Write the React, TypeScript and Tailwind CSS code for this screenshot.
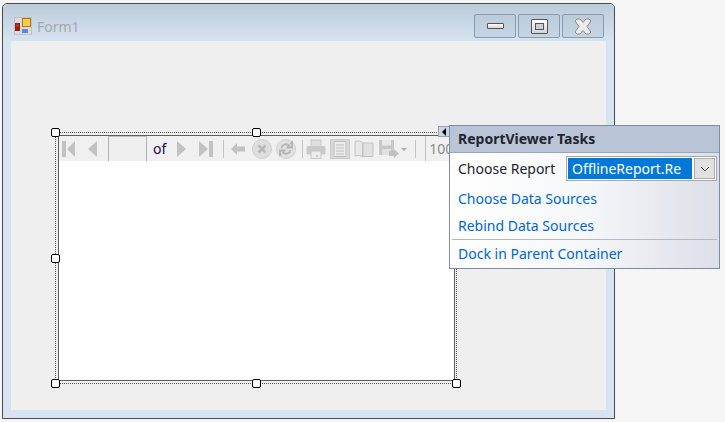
const gray = '#c2c2c2';

const FirstIcon = () => (
  <svg width="15" height="18" viewBox="0 0 15 18"><rect x="0" y="1" width="4" height="16" fill={gray} /><path d="M13 1v16L5 9z" fill={gray} /></svg>
);
const PrevIcon = () => (
  <svg width="11" height="18" viewBox="0 0 11 18"><path d="M10 1v16L1 9z" fill={gray} /></svg>
);
const NextIcon = () => (
  <svg width="11" height="18" viewBox="0 0 11 18"><path d="M1 1v16l9-8z" fill={gray} /></svg>
);
const LastIcon = () => (
  <svg width="14" height="18" viewBox="0 0 14 18"><path d="M0 1v16l9-8z" fill={gray} /><rect x="10" y="1" width="4" height="16" fill={gray} /></svg>
);
const BackIcon = () => (
  <svg width="14" height="12" viewBox="0 0 14 12"><path d="M0 6l6-6v3.500h8v5H6V12z" fill={gray} /></svg>
);
const StopIcon = () => (
  <svg width="20" height="20" viewBox="0 0 20 20">
    <circle cx="10" cy="10" r="9.500" fill="#dedede" stroke="#cfcfcf" />
    <path d="M6.500 6.500l7 7M13.500 6.500l-7 7" stroke="#b8b8b8" strokeWidth="2.500" />
  </svg>
);
const RefreshIcon = () => (
  <svg width="20" height="20" viewBox="0 0 20 20">
    <circle cx="10" cy="10" r="9.500" fill="#e0e0e0" stroke="#cfcfcf" />
    <path d="M5.500 9a4.500 4.500 0 0 1 7.500-2.500l-1.500 2H16V3.500L14.500 5" fill="none" stroke="#b4b4b4" strokeWidth="1.800" />
    <path d="M14.500 11a4.500 4.500 0 0 1-7.500 2.500l1.500-2H4v4.500L5.500 15" fill="none" stroke="#b4b4b4" strokeWidth="1.800" />
  </svg>
);
const PrintIcon = () => (
  <svg width="20" height="20" viewBox="0 0 20 20">
    <rect x="5" y="1" width="10" height="7" fill="#dedede" stroke="#c8c8c8" />
    <rect x="0.500" y="7" width="19" height="8.500" rx="1.500" fill="#c8c8c8" />
    <rect x="5" y="12" width="10" height="7.500" fill="#ececec" stroke="#c8c8c8" />
    <rect x="10" y="16" width="2" height="2" fill="#c8c8c8" />
  </svg>
);
const LayoutIcon = () => (
  <svg width="20" height="20" viewBox="0 0 20 20">
    <rect x="0.500" y="0.500" width="19" height="19" fill="#d8d8d8" stroke="#cccccc" />
    <rect x="4" y="2.500" width="12" height="15" fill="#ebebeb" stroke="#c0c0c0" />
    <path d="M6 6h8M6 9h8M6 12h8M6 15h8" stroke="#c0c0c0" />
  </svg>
);
const PageIcon = () => (
  <svg width="20" height="18" viewBox="0 0 20 18">
    <path d="M1 1.500c3-1 6-.5 7.500 1V17C7 15.500 4 15 1 16z" fill="#e8e8e8" stroke="#c2c2c2" />
    <path d="M9 3h10v13.500H9z" fill="#e0e0e0" stroke="#c2c2c2" />
  </svg>
);
const SaveIcon = () => (
  <svg width="20" height="20" viewBox="0 0 20 20">
    <path d="M0 1h15v15H0z" fill="#c8c8c8" />
    <rect x="3" y="1" width="9" height="5.500" fill="#e8e8e8" />
    <rect x="3" y="10" width="9" height="6" fill="#e0e0e0" />
    <path d="M10 12h5v-2l5 4.500-5 4.500v-2h-5z" fill="#c0c0c0" />
  </svg>
);

const Handle = ({ className }: { className: string }) => (
  <div className={`absolute h-[9px] w-[9px] rounded-[2px] border border-black bg-white ${className}`} />
);

const Separator = ({ className }: { className: string }) => (
  <div className={`h-[18px] w-px shrink-0 bg-[#c4c4c4] ${className}`} />
);

const CaptionButton = ({ children }: { children: React.ReactNode }) => (
  <div className="flex h-[24px] w-[42px] items-center justify-center rounded-[2px] border border-[#8a9ab2] bg-gradient-to-b from-[#bccbda] to-[#c6d5e4]">
    {children}
  </div>
);

const App = () => {
  return (
    <div className="relative h-[422px] w-[725px] overflow-hidden bg-[#f5f5f5] pt-[3px] pl-[2px] font-['Noto_Sans',sans-serif]">
      {/* Form window */}
      <div className="flex h-[416px] w-[613px] flex-col rounded-t-[5px] border border-[#4a4a4a] bg-[#d6e4f1]">
        <div className="flex h-[37px] items-start rounded-t-[4px] bg-gradient-to-b from-[#bccbda] to-[#d5e3f1] pr-[10px] pl-[11px]">
          <svg className="mt-[13px]" width="18" height="18" viewBox="0 0 18 18">
            <rect width="18" height="18" fill="#c0c0c0" />
            <rect x="1" y="1" width="16" height="16" fill="#dadada" />
            <rect x="1" y="6" width="5" height="8" fill="#9c1c10" />
            <rect x="2.500" y="7.500" width="2" height="2" fill="#e04030" />
            <rect x="8.500" y="1.500" width="8" height="8" fill="#f7cd48" stroke="#b07a10" />
            <rect x="8" y="12" width="6" height="4" fill="#4c8ee0" />
          </svg>
          <span className="mt-[13px] ml-[5px] text-[14px] leading-[20px] text-[#a4a8ac]">Form1</span>
          <div className="mt-[10px] ml-auto flex gap-[2px]">
            <CaptionButton>
              <div className="h-[6px] w-[17px] rounded-[1px] border border-[#555555] bg-gradient-to-b from-white to-[#d4d4d4]" />
            </CaptionButton>
            <CaptionButton>
              <div className="flex h-[15px] w-[17px] items-center justify-center rounded-[1px] border border-[#555555] bg-gradient-to-b from-white to-[#d4d4d4]">
                <div className="h-[7px] w-[9px] border border-[#555555] bg-[#c2d0df]" />
              </div>
            </CaptionButton>
            <CaptionButton>
              <svg width="18" height="17" viewBox="0 0 18 17">
                <path d="M1 3l2-2h3l3 3.500L12 1h3l2 2-4 5.500 4 5.500-2 2h-3L9 12.500 6 16H3l-2-2 4-5.500z" fill="#ececec" stroke="#8a8a8a" strokeWidth="1" />
              </svg>
            </CaptionButton>
          </div>
        </div>

        {/* Design surface */}
        <div className="mx-[8px] h-[369px] bg-[#efefef] pt-[94px] pl-[47px]">
          <div className="h-[246px] w-[397px] border border-[#5c5c5c] bg-white">
            <div className="flex h-[25px] items-center bg-[#f0f0f0] pl-[3px] text-[14px] [&>*]:shrink-0">
              <FirstIcon />
              <div className="ml-[10px]"><PrevIcon /></div>
              <div className="ml-[10px] h-full w-[39px] border-x border-t border-x-[#b0b0b0] border-t-[#c0c0c0] bg-[#efefef]" />
              <span className="ml-[6px] text-[#1a0a58]">of</span>
              <div className="ml-[10px]"><NextIcon /></div>
              <div className="ml-[12px]"><LastIcon /></div>
              <Separator className="ml-[10px]" />
              <div className="ml-[7px]"><BackIcon /></div>
              <div className="ml-[7px]"><StopIcon /></div>
              <div className="ml-[4px]"><RefreshIcon /></div>
              <Separator className="ml-[6px]" />
              <div className="ml-[3px]"><PrintIcon /></div>
              <div className="ml-[4px]"><LayoutIcon /></div>
              <div className="ml-[4px]"><PageIcon /></div>
              <div className="ml-[5px]"><SaveIcon /></div>
              <div className="mt-[2px] ml-[2px] h-0 w-0 border-x-[3px] border-t-[3px] border-x-transparent border-t-[#a8a8a8]" />
              <Separator className="ml-[8px]" />
              <div className="ml-[9px] flex h-full w-[27px] items-center border-l border-[#c0c0c0] pl-[3px] whitespace-nowrap text-[#8c8c8c]">100%</div>
            </div>
          </div>
        </div>
      </div>

      {/* Selection frame */}
      <div className="absolute top-[132px] left-[55px] h-[252px] w-[402px] border border-dotted border-[#555555]" />
      <Handle className="top-[128px] left-[51px]" />
      <Handle className="top-[128px] left-[252px]" />
      <Handle className="top-[254px] left-[51px]" />
      <Handle className="top-[379px] left-[51px]" />
      <Handle className="top-[379px] left-[252px]" />
      <Handle className="top-[379px] left-[452px]" />

      {/* Smart tag */}
      <div className="absolute top-[126px] left-[438px] flex h-[11px] w-[12px] items-center justify-center border border-[#8fa3bd] bg-[#c8d6e6]">
        <div className="h-0 w-0 border-y-[4px] border-r-[4px] border-y-transparent border-r-black" />
      </div>

      {/* Tasks panel */}
      <div className="absolute top-[125px] left-[449px] h-[144px] w-[271px] border border-[#7f8da3] bg-gradient-to-r from-white via-[#f6f7f9] to-[#dcdfe8] text-[14px] leading-[20px]">
        <div className="flex h-[27px] items-center border-b border-[#9aa7ba] bg-[#b9c5d6] pl-[8px] font-bold text-[#1f2430]">ReportViewer Tasks</div>
        <div className="flex h-[31px] items-center pr-[2px] pl-[8px] text-[#1f2430]">
          <span>Choose Report</span>
          <div className="ml-auto flex h-[25px] w-[151px] items-center gap-[2px] border border-[#a8a8a8] bg-white p-px">
            <div className="flex h-full w-[124px] items-center bg-[#0078d7] pl-[4px] text-white">OfflineReport.Re</div>
            <div className="flex h-full flex-1 items-center justify-center border border-[#adadad] bg-[#e1e1e1]">
              <svg width="10" height="6" viewBox="0 0 10 6"><path d="M1 1l4 4 4-4" fill="none" stroke="#555555" /></svg>
            </div>
          </div>
        </div>
        <div className="mt-px flex h-[27px] items-center pl-[8px] text-[#0066cc]">Choose Data Sources</div>
        <div className="flex h-[27px] items-center pl-[8px] text-[#0066cc]">Rebind Data Sources</div>
        <div className="mx-[2px] h-px bg-[#b4b8c0]" />
        <div className="flex h-[28px] items-center pl-[8px] text-[#0066cc]">Dock in Parent Container</div>
      </div>
    </div>
  );
};

export default App;
